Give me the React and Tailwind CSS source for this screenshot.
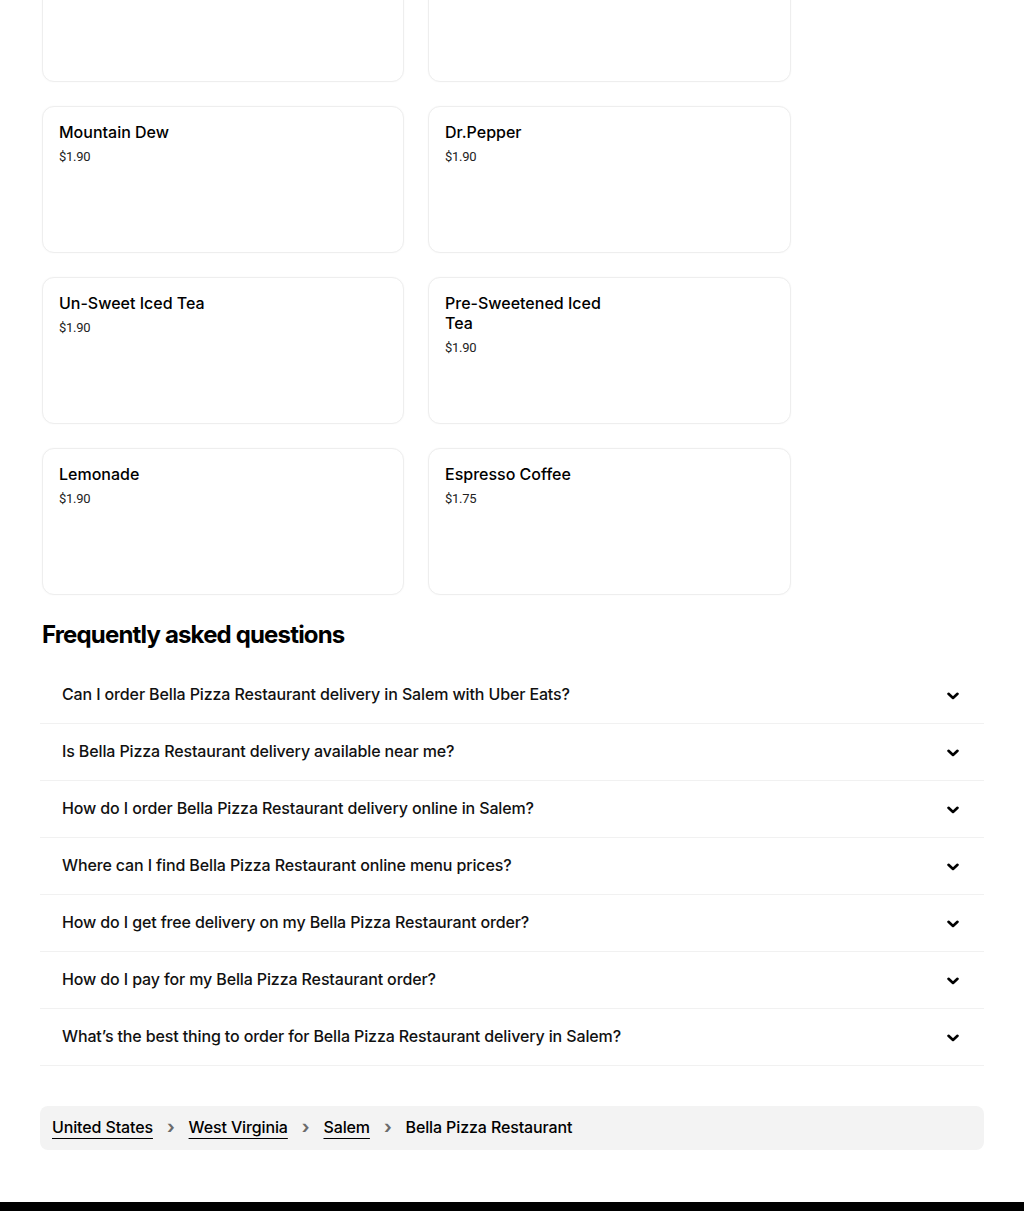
import React from "react";

const items = [
  { name: "", price: "" },
  { name: "", price: "" },
  { name: "Mountain Dew", price: "$1.90" },
  { name: "Dr.Pepper", price: "$1.90" },
  { name: "Un-Sweet Iced Tea", price: "$1.90" },
  { name: "Pre-Sweetened Iced Tea", price: "$1.90" },
  { name: "Lemonade", price: "$1.90" },
  { name: "Espresso Coffee", price: "$1.75" },
];

const faqs = [
  "Can I order Bella Pizza Restaurant delivery in Salem with Uber Eats?",
  "Is Bella Pizza Restaurant delivery available near me?",
  "How do I order Bella Pizza Restaurant delivery online in Salem?",
  "Where can I find Bella Pizza Restaurant online menu prices?",
  "How do I get free delivery on my Bella Pizza Restaurant order?",
  "How do I pay for my Bella Pizza Restaurant order?",
  "What\u2019s the best thing to order for Bella Pizza Restaurant delivery in Salem?",
];

const crumbs = ["United States", "West Virginia", "Salem"];

const Chevron = () => (
  <svg className="mt-[3px]" width="12" height="8" viewBox="0 0 12 8" fill="none">
    <path d="M1.5 1.8 L6 6 L10.5 1.8" stroke="#000" strokeWidth="2.6" strokeLinecap="round" strokeLinejoin="round" />
  </svg>
);

const ItemCard = ({ name, price }) => (
  <div className="h-[147px] rounded-xl border border-[#eeeeee] bg-white px-4 pt-[15px] shadow-[0_0_2px_rgba(0,0,0,0.04)]">
    {name && (
      <>
        <div className="max-w-[170px] text-[16px] font-medium leading-5 text-black">{name}</div>
        <div className="mt-[5px] font-['Roboto',sans-serif] text-[13px] leading-5 tracking-[-0.02em] text-[#222]">{price}</div>
      </>
    )}
  </div>
);

const App = () => {
  return (
    <div className="h-[1211px] overflow-hidden bg-white font-['Inter',sans-serif] text-black">
      <div className="px-[42px]">
        <div className="mt-[-65px] grid grid-cols-[362px_363px] gap-x-[24px] gap-y-[24px]">
          {items.map((it, i) => (
            <ItemCard key={i} name={it.name} price={it.price} />
          ))}
        </div>

        <h2 className="mt-[24px] text-[24px] font-bold leading-8 tracking-[-0.035em]">
          Frequently asked questions
        </h2>

        <div className="mx-[-2px] mt-4">
          {faqs.map((q) => (
            <div key={q} className="flex h-[57px] items-center justify-between border-b border-[#f1f1f1] pb-[2px] pl-[22px] pr-[25px]">
              <span className="text-[16px] font-medium leading-5 tracking-[-0.008em] text-[#111]">{q}</span>
              <Chevron />
            </div>
          ))}
        </div>
      </div>

      <div className="mx-[40px] mt-[40px] flex h-[44px] items-center gap-3 rounded-lg bg-[#f3f3f3] px-3 pb-[2px] text-[16px] font-medium tracking-[-0.008em]">
        {crumbs.map((c) => (
          <React.Fragment key={c}>
            <a href="#" className="underline decoration-1 underline-offset-[5px]">
              {c}
            </a>
            <span className="px-[2px] text-[18px] font-bold leading-none text-[#6b6b6b]">›</span>
          </React.Fragment>
        ))}
        <span>Bella Pizza Restaurant</span>
      </div>

      <div className="mt-[52px] h-[20px] bg-black" />
    </div>
  );
};

export default App;
